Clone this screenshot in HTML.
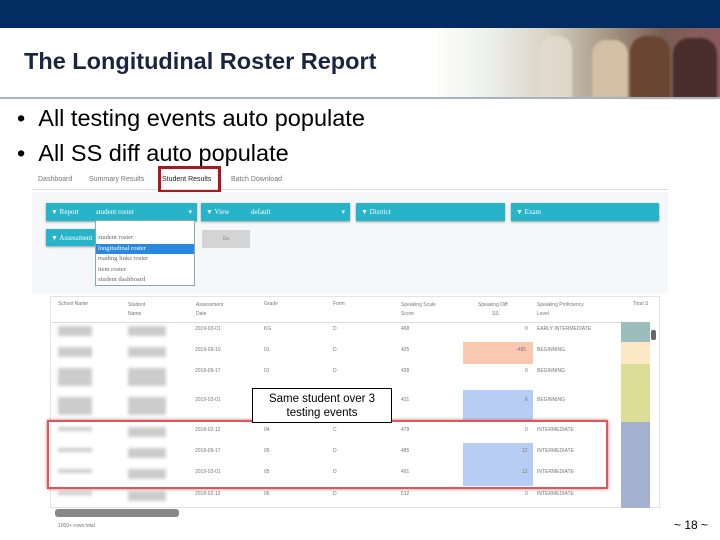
<!DOCTYPE html>
<html><head><meta charset="utf-8"><style>
*{margin:0;padding:0;box-sizing:border-box}
body{width:720px;height:540px;position:relative;overflow:hidden;background:#fff;font-family:"Liberation Sans",sans-serif}
.a{position:absolute}
.f{position:absolute;background:#27b4c9;height:18px;color:#fff;font-family:"Liberation Serif",serif;font-size:7px;line-height:18px;padding-left:5px;box-shadow:0 1px 2px #999}
.t{font-size:5px;color:#666}
.c{position:absolute;font-size:5px;color:#777}
.blur{position:absolute;background:#ccc;filter:blur(1.5px);height:4px}
</style></head><body>
<div class="a" style="left:0;top:0;width:720px;height:28px;background:#022d63"></div>
<div class="a" style="left:430px;top:28px;width:290px;height:70px;background:linear-gradient(90deg,#fff 0%,#eef0ec 20%,#d8d4c4 40%,#a89a86 60%,#7a5e52 80%,#8b5a60 100%)"></div>
<div class="a" style="left:540px;top:36px;width:32px;height:62px;border-radius:14px 14px 0 0;background:#e6dcd2;opacity:.8;filter:blur(1px)"></div>
<div class="a" style="left:592px;top:40px;width:36px;height:58px;border-radius:14px 14px 0 0;background:#d3bfa4;filter:blur(1px)"></div>
<div class="a" style="left:630px;top:36px;width:40px;height:62px;border-radius:16px 16px 0 0;background:#6a4532;filter:blur(1px)"></div>
<div class="a" style="left:673px;top:38px;width:44px;height:60px;border-radius:16px 16px 0 0;background:#4a2e2e;filter:blur(1px)"></div>
<div class="a" style="left:24px;top:48px;font-size:23.5px;font-weight:bold;color:#1b2440">The Longitudinal Roster Report</div>
<div class="a" style="left:0;top:97px;width:720px;height:2px;background:#aab3bb"></div>
<div class="a" style="left:17px;top:101px;font-size:23.5px;color:#000;line-height:35px">•&nbsp;&nbsp;All testing events auto populate<br>•&nbsp;&nbsp;All SS diff auto populate</div>

<div class="a" style="left:30px;top:170px;width:638px;height:362px;background:#fff"></div>
<div class="a t" style="left:38px;top:176px;font-size:7px;color:#777">Dashboard</div>
<div class="a t" style="left:89px;top:176px;font-size:7px;color:#777">Summary Results</div>
<div class="a" style="left:162px;top:176px;font-size:7px;color:#222">Student Results</div>
<div class="a t" style="left:231px;top:176px;font-size:7px;color:#777">Batch Download</div>
<div class="a" style="left:32px;top:189px;width:636px;height:1px;background:#ddd"></div>
<div class="a" style="left:158px;top:166px;width:63px;height:27px;border:3px solid #b0141c"></div>
<div class="a" style="left:32px;top:192px;width:636px;height:102px;background:#f6f7f8"></div>
<div class="f" style="left:46px;top:203px;width:151px">▼ Report<span style="position:absolute;left:50px">student roster</span><span style="position:absolute;right:5px">▾</span></div>
<div class="f" style="left:201px;top:203px;width:149px">▼ View<span style="position:absolute;left:50px">default</span><span style="position:absolute;right:5px">▾</span></div>
<div class="f" style="left:356px;top:203px;width:149px">▼ District</div>
<div class="f" style="left:511px;top:203px;width:148px">▼ Exam</div>
<div class="f" style="left:46px;top:229px;width:50px;height:17px">▼ Assessment D</div>
<div class="a" style="left:95px;top:220px;width:100px;height:66px;background:#fff;border:1px solid #8aa;font-family:'Liberation Serif',serif;font-size:6.5px;color:#666;line-height:10.5px;padding-top:12px">
<div style="padding-left:2px">student roster</div>
<div style="padding-left:2px;background:#2b88e0;color:#fff">longitudinal roster</div>
<div style="padding-left:2px">reading links roster</div>
<div style="padding-left:2px">item roster</div>
<div style="padding-left:2px">student dashboard</div></div>
<div class="a" style="left:202px;top:230px;width:48px;height:18px;background:#d4d4d4;font-size:5px;color:#888;text-align:center;line-height:18px">Go</div>

<div class="a" style="left:50px;top:296px;width:610px;height:212px;border:1px solid #e4e4e4"></div>
<div class="c" style="left:58px;top:301px">School Name</div>
<div class="c" style="left:128px;top:301px;line-height:9px">Student<br>Name</div>
<div class="c" style="left:196px;top:301px;line-height:9px">Assessment<br>Date</div>
<div class="c" style="left:264px;top:301px">Grade</div>
<div class="c" style="left:333px;top:301px">Form</div>
<div class="c" style="left:401px;top:301px;line-height:9px">Speaking Scale<br>Score</div>
<div class="c" style="left:478px;top:301px;line-height:9px">Speaking Diff<br>&nbsp;&nbsp;&nbsp;&nbsp;&nbsp;&nbsp;&nbsp;&nbsp;&nbsp;&nbsp;SS</div>
<div class="c" style="left:537px;top:301px;line-height:9px">Speaking Proficiency<br>Level</div>
<div class="c" style="left:633px;top:301px">Total S</div>
<div class="a" style="left:52px;top:322px;width:598px;height:1px;background:#ddd"></div>
<div class="a" style="left:463px;top:342px;width:70px;height:22px;background:#f8c9b0"></div>
<div class="a" style="left:463px;top:390px;width:70px;height:32px;background:#b8cdf4"></div>
<div class="a" style="left:463px;top:443px;width:70px;height:43px;background:#b8cdf4"></div>
<div class="a" style="left:621px;top:322px;width:29px;height:20px;background:#9dbcbd"></div>
<div class="a" style="left:621px;top:342px;width:29px;height:22px;background:#fde8c6"></div>
<div class="a" style="left:621px;top:364px;width:29px;height:58px;background:#dcdd96"></div>
<div class="a" style="left:621px;top:422px;width:29px;height:86px;background:#a3b0cf"></div>
<div class="a" style="left:651px;top:330px;width:5px;height:10px;background:#666;border-radius:2px"></div>
<div class="c" style="left:195px;top:326px">2019-03-01</div><div class="c" style="left:264px;top:326px">KG</div><div class="c" style="left:333px;top:326px">D</div><div class="c" style="left:401px;top:326px">468</div><div class="c" style="left:525px;top:326px">0</div><div class="c" style="left:537px;top:326px">EARLY INTERMEDIATE</div>
<div class="c" style="left:195px;top:347px">2019-09-10</div><div class="c" style="left:264px;top:347px">01</div><div class="c" style="left:333px;top:347px">D</div><div class="c" style="left:401px;top:347px">425</div><div class="c" style="left:516px;top:347px">-485</div><div class="c" style="left:537px;top:347px">BEGINNING</div>
<div class="c" style="left:195px;top:368px">2018-09-17</div><div class="c" style="left:264px;top:368px">01</div><div class="c" style="left:333px;top:368px">D</div><div class="c" style="left:401px;top:368px">428</div><div class="c" style="left:525px;top:368px">0</div><div class="c" style="left:537px;top:368px">BEGINNING</div>
<div class="c" style="left:195px;top:397px">2019-03-01</div><div class="c" style="left:401px;top:397px">431</div><div class="c" style="left:525px;top:397px">6</div><div class="c" style="left:537px;top:397px">BEGINNING</div>
<div class="c" style="left:195px;top:427px">2018-02-12</div><div class="c" style="left:264px;top:427px">04</div><div class="c" style="left:333px;top:427px">C</div><div class="c" style="left:401px;top:427px">479</div><div class="c" style="left:525px;top:427px">0</div><div class="c" style="left:537px;top:427px">INTERMEDIATE</div>
<div class="c" style="left:195px;top:448px">2018-09-17</div><div class="c" style="left:264px;top:448px">05</div><div class="c" style="left:333px;top:448px">D</div><div class="c" style="left:401px;top:448px">485</div><div class="c" style="left:522px;top:448px">12</div><div class="c" style="left:537px;top:448px">INTERMEDIATE</div>
<div class="c" style="left:195px;top:469px">2019-03-01</div><div class="c" style="left:264px;top:469px">05</div><div class="c" style="left:333px;top:469px">D</div><div class="c" style="left:401px;top:469px">491</div><div class="c" style="left:522px;top:469px">12</div><div class="c" style="left:537px;top:469px">INTERMEDIATE</div>
<div class="c" style="left:195px;top:491px">2018-02-12</div><div class="c" style="left:264px;top:491px">06</div><div class="c" style="left:333px;top:491px">D</div><div class="c" style="left:401px;top:491px">512</div><div class="c" style="left:525px;top:491px">0</div><div class="c" style="left:537px;top:491px">INTERMEDIATE</div>
<div class="blur" style="left:58px;top:326px;width:34px;height:10px"></div><div class="blur" style="left:128px;top:326px;width:38px;height:10px"></div>
<div class="blur" style="left:58px;top:347px;width:34px;height:10px"></div><div class="blur" style="left:128px;top:347px;width:38px;height:10px"></div>
<div class="blur" style="left:58px;top:368px;width:34px;height:18px"></div><div class="blur" style="left:128px;top:368px;width:38px;height:18px"></div>
<div class="blur" style="left:58px;top:397px;width:34px;height:18px"></div><div class="blur" style="left:128px;top:397px;width:38px;height:18px"></div>
<div class="blur" style="left:58px;top:427px;width:34px;height:4px"></div><div class="blur" style="left:128px;top:427px;width:38px;height:10px"></div>
<div class="blur" style="left:58px;top:448px;width:34px;height:4px"></div><div class="blur" style="left:128px;top:448px;width:38px;height:10px"></div>
<div class="blur" style="left:58px;top:469px;width:34px;height:4px"></div><div class="blur" style="left:128px;top:469px;width:38px;height:10px"></div>
<div class="blur" style="left:58px;top:491px;width:34px;height:4px"></div><div class="blur" style="left:128px;top:491px;width:38px;height:10px"></div>
<div class="a" style="left:55px;top:509px;width:124px;height:8px;background:#888;border-radius:3px"></div>
<div class="c" style="left:58px;top:523px">1000+ rows total</div>

<div class="a" style="left:47px;top:420px;width:561px;height:69px;border:2px solid #d9575f;box-shadow:0 0 3px #c66"></div>
<div class="a" style="left:252px;top:388px;width:140px;height:35px;background:#fff;border:1px solid #000;font-size:11.5px;text-align:center;line-height:14px;padding-top:3px">Same student over 3<br>testing events</div>

<div class="a" style="left:674px;top:518px;font-size:12px;color:#000">~ 18 ~</div>
</body></html>
